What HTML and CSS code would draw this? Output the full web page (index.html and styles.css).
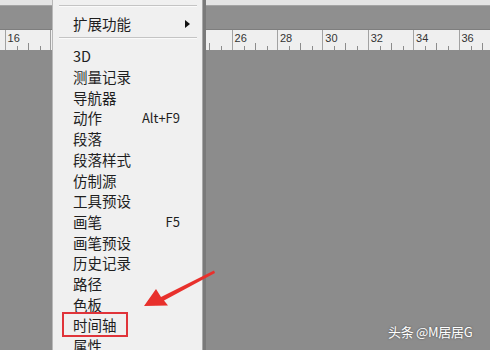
FILE: index.html
```html
<!DOCTYPE html>
<html lang="zh">
<head>
<meta charset="utf-8">
<title>窗口菜单</title>
<link rel="stylesheet" href="styles.css">
</head>
<body>
<div class="app">
  <div class="titlestrip"></div>
  <div class="optbar"></div>
  <div class="ruler">
    <div class="seg first"></div>
    <div class="seg"><span>16</span></div>
    <div class="seg"><span>18</span></div>
    <div class="seg"><span>20</span></div>
    <div class="seg"><span>22</span></div>
    <div class="seg"><span>24</span></div>
    <div class="seg"><span>26</span></div>
    <div class="seg"><span>28</span></div>
    <div class="seg"><span>30</span></div>
    <div class="seg"><span>32</span></div>
    <div class="seg"><span>34</span></div>
    <div class="seg"><span>36</span></div>
  </div>
  <div class="canvas"></div>

  <div class="menu">
    <div class="item"><span>工作区</span><span class="sub"></span></div>
    <div class="sep"></div>
    <div class="item"><span>扩展功能</span><span class="sub"></span></div>
    <div class="sep"></div>
    <div class="item"><span>3D</span></div>
    <div class="item"><span>测量记录</span></div>
    <div class="item"><span>导航器</span></div>
    <div class="item"><span>动作</span><span class="key">Alt+F9</span></div>
    <div class="item"><span>段落</span></div>
    <div class="item"><span>段落样式</span></div>
    <div class="item"><span>仿制源</span></div>
    <div class="item"><span>工具预设</span></div>
    <div class="item"><span>画笔</span><span class="key">F5</span></div>
    <div class="item"><span>画笔预设</span></div>
    <div class="item"><span>历史记录</span></div>
    <div class="item"><span>路径</span></div>
    <div class="item"><span>色板</span></div>
    <div class="item"><span>时间轴</span></div>
    <div class="item"><span>属性</span></div>
  </div>

  <div class="highlight"></div>
  <svg class="arrow" width="490" height="350" viewBox="0 0 490 350">
    <polygon points="214,270.5 161,297 156,289 144,306 168,305.5 164,300.5 215,273" fill="#e8302c"/>
  </svg>
  <div class="watermark">头条 @M居居G</div>
</div>
</body>
</html>
```

FILE: styles.css
```css
html, body {
  margin: 0;
  padding: 0;
}
body {
  width: 490px;
  height: 350px;
  overflow: hidden;
  background: #8c8c8c;
}
.app {
  position: relative;
  width: 490px;
  height: 350px;
  display: flex;
  flex-direction: column;
  overflow: hidden;
}
.titlestrip {
  height: 5px;
  background: #e4e4e4;
  border-bottom: 1px solid #a4a4a4;
}
.optbar {
  height: 23px;
  background: #8f8f8f;
  border-bottom: 1px solid #7e7e7e;
}
.ruler {
  height: 20px;
  display: flex;
  background: #efefef;
  flex: none;
}
.seg {
  flex: none;
  width: 45.4px;
  box-sizing: border-box;
  border-left: 1px solid #a2a2a2;
  background:
    linear-gradient(#8c8c8c, #8c8c8c) 11px 100% / 1px 4px no-repeat,
    linear-gradient(#8c8c8c, #8c8c8c) 22px 100% / 1px 7px no-repeat,
    linear-gradient(#8c8c8c, #8c8c8c) 34px 100% / 1px 4px no-repeat,
    #efefef;
  font-family: "Liberation Sans", Arial, sans-serif;
  font-size: 11px;
  color: #333;
  padding: 3px 0 0 2px;
  line-height: 11px;
}
.seg.first {
  width: 4.6px;
  border-left: none;
  background: #efefef;
}
.canvas {
  flex: 1;
  background: #8c8c8c;
}
.menu {
  position: absolute;
  left: 52px;
  top: -19px;
  width: 151px;
  box-sizing: border-box;
  padding: 0 22px 0 20px;
  background: #f0f0f0;
  border-left: 1px solid #b8b8b8;
  border-right: 1px solid #a8a8a8;
  box-shadow: 3px 0 0 #7a7a7a;
  font-family: "Noto Sans CJK SC", "Microsoft YaHei", sans-serif;
  font-size: 14.5px;
  color: #1e1e1e;
}
.item {
  height: 20.7px;
  line-height: 20.7px;
  display: flex;
  justify-content: space-between;
  align-items: center;
  white-space: nowrap;
}
.key {
  font-size: 13px;
}
.sub {
  width: 0;
  height: 0;
  border-top: 4px solid transparent;
  border-bottom: 4px solid transparent;
  border-left: 5px solid #111;
  margin-right: -10px;
}
.sep {
  margin: 3px -17px 7px -14px;
  border-top: 1px solid #c4c4c4;
  border-bottom: 1px solid #fafafa;
}
.highlight {
  position: absolute;
  left: 62px;
  top: 312px;
  width: 66px;
  height: 25px;
  box-sizing: border-box;
  border: 2px solid #e0343a;
}
.arrow {
  position: absolute;
  left: 0;
  top: 0;
}
.watermark {
  position: absolute;
  left: 388px;
  top: 322px;
  font-family: "Noto Sans CJK SC", sans-serif;
  font-size: 13px;
  color: #fff;
  letter-spacing: -0.3px;
  text-shadow: 0 0 2px rgba(0,0,0,0.5);
}
```
